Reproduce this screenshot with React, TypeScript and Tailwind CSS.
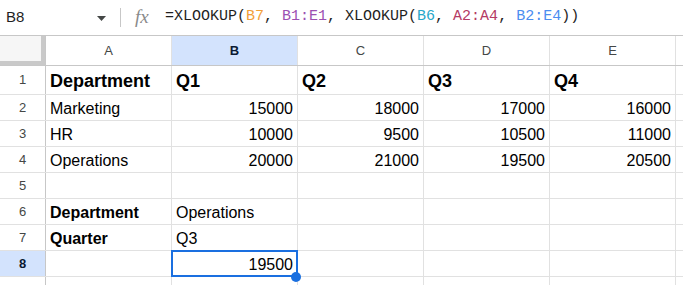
import React from 'react';

type Cell = { v: string; bold?: boolean; right?: boolean };

const cols = ['A', 'B', 'C', 'D', 'E', ''];

const rows: Cell[][] = [
  [{ v: 'Department', bold: true }, { v: 'Q1', bold: true }, { v: 'Q2', bold: true }, { v: 'Q3', bold: true }, { v: 'Q4', bold: true }],
  [{ v: 'Marketing' }, { v: '15000', right: true }, { v: '18000', right: true }, { v: '17000', right: true }, { v: '16000', right: true }],
  [{ v: 'HR' }, { v: '10000', right: true }, { v: '9500', right: true }, { v: '10500', right: true }, { v: '11000', right: true }],
  [{ v: 'Operations' }, { v: '20000', right: true }, { v: '21000', right: true }, { v: '19500', right: true }, { v: '20500', right: true }],
  [],
  [{ v: 'Department', bold: true }, { v: 'Operations' }],
  [{ v: 'Quarter', bold: true }, { v: 'Q3' }],
  [{ v: '' }, { v: '19500', right: true }],
  [],
];

const FormulaBar: React.FC = () => (
  <div className="flex h-[36px] items-center border-b border-[#c7c7c7] bg-white">
    <div className="flex w-[120px] items-center pl-[6px] pr-[14px]">
      <span className="flex-1 text-[15px] text-[#1f1f1f]">B8</span>
      <svg width="9" height="5" viewBox="0 0 9 5" className="mt-[1px]">
        <path d="M0 0h9L4.5 5z" fill="#444746" />
      </svg>
    </div>
    <div className="h-[19px] w-px bg-[#c7c7c7]" />
    <span className="ml-[14px] w-[30px] font-['Liberation_Serif'] text-[19px] italic text-[#8a8a8a]">fx</span>
    <span className="font-['Liberation_Mono'] text-[15px] text-[#1f1f1f]">
      =XLOOKUP(<span className="text-[#f29f38]">B7</span>, <span className="text-[#9c4fb2]">B1:E1</span>, XLOOKUP(
      <span className="text-[#27a7c8]">B6</span>, <span className="text-[#b53a65]">A2:A4</span>,{' '}
      <span className="text-[#4b8df0]">B2:E4</span>))
    </span>
  </div>
);

export default function App() {
  return (
    <div className="h-[285px] w-[683px] overflow-hidden bg-white font-['Liberation_Sans',Arial,sans-serif] text-[#000]">
      <FormulaBar />

      <div className="flex h-[30px] border-b border-[#c7c7c7]">
        <div className="w-[46px] shrink-0 border-r border-[#c7c7c7] bg-[#f8f9fa]">
          <div className="h-full border-r-[4px] border-b-[4px] border-[#c9c9c9] bg-[#f6f6f6]" />
        </div>
        {cols.map((c) => (
          <div
            key={c || 'F'}
            className={`flex w-[126px] shrink-0 items-center justify-center border-r border-[#e1e1e1] text-[13px] ${
              c === 'B' ? 'bg-[#d3e3fd] font-semibold text-[#0b1a33]' : 'text-[#444746]'
            }`}
          >
            {c}
          </div>
        ))}
      </div>

      {rows.map((row, ri) => {
        const n = ri + 1;
        const first = n === 1;
        return (
          <div key={n} className={`flex border-b border-[#e1e1e1] ${first ? 'h-[29px]' : 'h-[26px]'}`}>
            <div
              className={`flex w-[46px] shrink-0 items-center justify-center border-r border-[#c7c7c7] text-[13px] ${
                n === 8 ? 'bg-[#d3e3fd] font-bold text-[#0b1a33]' : 'text-[#444746]'
              }`}
            >
              {n}
            </div>
            {cols.map((c, ci) => {
              const cell = row[ci];
              const selected = n === 8 && c === 'B';
              return (
                <div
                  key={c || 'F'}
                  className={`relative flex w-[126px] shrink-0 items-end border-r border-[#e1e1e1] px-[4px] ${
                    first ? 'pb-[2px] text-[18px] leading-[22px]' : 'pb-[1px] text-[16px] leading-[20px]'
                  } ${cell?.right ? 'justify-end' : ''} ${cell?.bold ? 'font-bold' : ''}`}
                >
                  {cell?.v}
                  {selected && (
                    <>
                      <div className="pointer-events-none absolute -top-px -left-px z-10 h-[27px] w-[127px] border-2 border-[#1a6fe0]" />
                      <div className="absolute -right-[4px] -bottom-[6px] z-20 h-[10px] w-[10px] rounded-full bg-[#1a6fe0]" />
                    </>
                  )}
                </div>
              );
            })}
          </div>
        );
      })}
    </div>
  );
}
